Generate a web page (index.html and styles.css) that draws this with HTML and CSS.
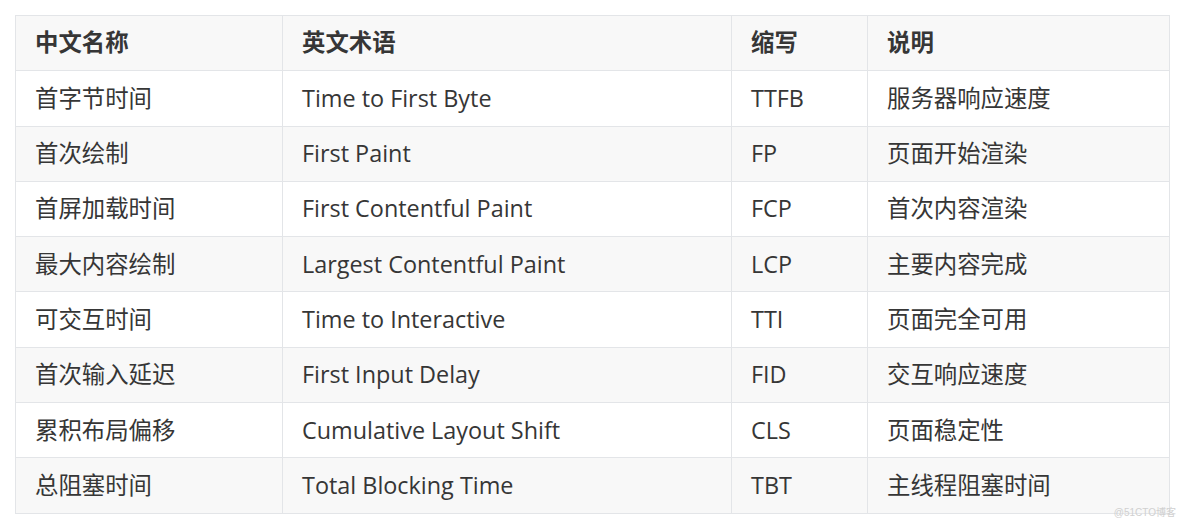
FILE: index.html
```html
<!DOCTYPE html>
<html lang="zh">
<head>
<meta charset="utf-8">
<link rel="stylesheet" href="styles.css">
</head>
<body>
<div class="page">
<table class="metrics">
<colgroup>
<col class="c1"><col class="c2"><col class="c3"><col class="c4">
</colgroup>
<thead>
<tr><th>中文名称</th><th>英文术语</th><th>缩写</th><th>说明</th></tr>
</thead>
<tbody>
<tr><td>首字节时间</td><td>Time to First Byte</td><td>TTFB</td><td>服务器响应速度</td></tr>
<tr><td>首次绘制</td><td>First Paint</td><td>FP</td><td>页面开始渲染</td></tr>
<tr><td>首屏加载时间</td><td>First Contentful Paint</td><td>FCP</td><td>首次内容渲染</td></tr>
<tr><td>最大内容绘制</td><td>Largest Contentful Paint</td><td>LCP</td><td>主要内容完成</td></tr>
<tr><td>可交互时间</td><td>Time to Interactive</td><td>TTI</td><td>页面完全可用</td></tr>
<tr><td>首次输入延迟</td><td>First Input Delay</td><td>FID</td><td>交互响应速度</td></tr>
<tr><td>累积布局偏移</td><td>Cumulative Layout Shift</td><td>CLS</td><td>页面稳定性</td></tr>
<tr><td>总阻塞时间</td><td>Total Blocking Time</td><td>TBT</td><td>主线程阻塞时间</td></tr>
</tbody>
</table>
<div class="watermark">@51CTO博客</div>
</div>
</body>
</html>
```
FILE: styles.css
```css
html, body {
  margin: 0;
  padding: 0;
  background: #ffffff;
}
.page {
  position: relative;
  width: 1184px;
  height: 526px;
  padding: 15px 0 0 15px;
  box-sizing: border-box;
}
.metrics {
  border-collapse: collapse;
  width: 1154px;
  table-layout: fixed;
  font-family: "Open Sans", "Noto Sans CJK SC", sans-serif;
  font-size: 23.4px;
  color: #363636;
}
.c1 { width: 267px; }
.c2 { width: 449px; }
.c3 { width: 136px; }
.c4 { width: 302px; }
.metrics th,
.metrics td {
  border: 1.5px solid #e3e5e8;
  height: 55.3px;
  padding: 0 0 0 19px;
  text-align: left;
  box-sizing: border-box;
  vertical-align: middle;
  line-height: 1;
}
.metrics th {
  font-weight: bold;
  background: #f8f8f8;
}
.metrics tbody tr:nth-child(even) td {
  background: #f8f8f8;
}
.watermark {
  position: absolute;
  right: 8px;
  bottom: 7px;
  font-family: "Liberation Sans", "Noto Sans CJK SC", sans-serif;
  font-size: 10px;
  color: #d0d0d0;
}
```
